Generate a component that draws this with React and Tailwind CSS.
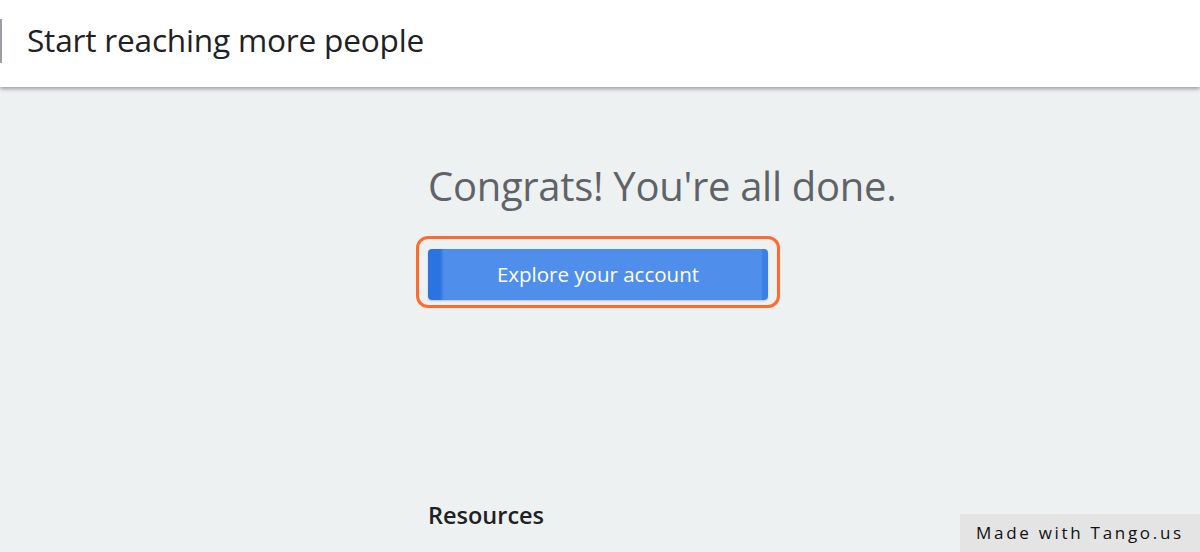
export default function App() {
  return (
    <div className="w-[1200px] h-[552px] overflow-hidden bg-[#eef1f2] flex flex-col relative font-['Open_Sans',sans-serif]">
      {/* Header */}
      <header className="h-[87px] bg-white shadow-[0_2px_4px_rgba(0,0,0,0.35)] flex items-center relative z-10 shrink-0">
        <div className="w-[2px] h-[44px] bg-[#9aa0a6] -mt-[6px]" />
        <h1 className="ml-[25px] -mt-[8px] text-[31.6px] tracking-[-0.2px] text-[#202124]">
          Start reaching more people
        </h1>
      </header>

      {/* Body */}
      <main className="flex-1 pl-[428px] pt-[74px]">
        <h2 className="text-[40px] leading-[50px] text-[#5f6368] tracking-[-0.3px]">
          Congrats! You're all done.
        </h2>

        <div className="mt-[25px] -ml-[12px] w-[364px] h-[72px] rounded-[12px] border-[3px] border-[#ff6b2c] px-[9px] pt-[10px] pb-[5px]">
          <button className="w-full h-full rounded-[4px] bg-[linear-gradient(90deg,#2a73e0_0px,#2a73e0_12px,#4f8eea_16px,#4f8eea_calc(100%-7px),#3a7fe6_calc(100%-5px))] text-white text-[20.5px] flex items-center justify-center shadow-[0_1px_2px_rgba(0,0,0,0.2)]">
            Explore your account
          </button>
        </div>

        <h3 className="mt-[190px] text-[23.5px] font-semibold text-[#202124]">
          Resources
        </h3>
      </main>

      {/* Tango badge */}
      <div className="absolute right-0 bottom-0 w-[240px] h-[38px] bg-[#e4e4e4] flex items-center justify-center text-[17px] tracking-[2.7px] text-[#111]">
        Made with Tango.us
      </div>
    </div>
  );
}
